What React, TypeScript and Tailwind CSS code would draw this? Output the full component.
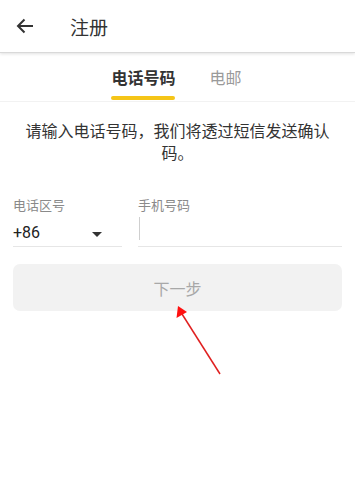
import React from "react";

export default function App() {
  const font = { fontFamily: '"Noto Sans CJK SC", "Noto Sans", Roboto, sans-serif' };
  return (
    <div className="w-[355px] h-[478px] bg-white relative overflow-hidden" style={font}>
      <div className="h-[53px] flex items-center border-b border-[#d9d9d9] shadow-[0_1px_3px_rgba(0,0,0,0.12)]">
        <svg width="18" height="16" viewBox="0 0 18 16" className="ml-[16px]">
          <path d="M17 8H2M8.5 1.5L2 8l6.5 6.5" stroke="#333" strokeWidth="2" fill="none" />
        </svg>
        <span className="ml-[36px] text-[19px] text-[#333] leading-none">注册</span>
      </div>
      <div className="h-[49px] flex justify-center border-b border-[#f2f2f2]">
        <div className="relative flex flex-col items-center ml-[-2px]">
          <span className="mt-[13px] text-[16px] font-bold text-[#333] leading-[22px]">电话号码</span>
          <div className="absolute bottom-[1px] w-[64px] h-[4px] rounded-full bg-[#f5c518]" />
        </div>
        <span className="ml-[34px] mt-[13px] text-[16px] text-[#9a9a9a] leading-[22px]">电邮</span>
      </div>
      <p className="mt-[17px] px-[24px] text-center text-[16px] text-[#333] leading-[22px]">
        请输入电话号码，我们将透过短信发送确认码。
      </p>
      <div className="mt-[33px] mx-[13px] flex gap-[16px]">
        <div className="w-[109px]">
          <div className="text-[13px] text-[#8a8a8a] leading-[18px]">电话区号</div>
          <div className="mt-[5px] h-[28px] flex items-center justify-between border-b border-[#e6e6e6]">
            <span className="text-[16px] text-[#222] leading-none" style={{ fontFamily: 'Roboto, sans-serif' }}>+86</span>
            <svg width="10" height="6" viewBox="0 0 10 6" className="mr-[20px] mt-[4px]">
              <path d="M0 0h10L5 5z" fill="#333" />
            </svg>
          </div>
        </div>
        <div className="flex-1">
          <div className="text-[13px] text-[#8a8a8a] leading-[18px]">手机号码</div>
          <div className="mt-[5px] h-[28px] border-b border-[#e6e6e6] flex items-start">
            <div className="w-[1px] h-[23px] bg-[#cfcfcf] ml-[1px] mt-[-2px]" />
          </div>
        </div>
      </div>
      <div className="mt-[17px] mx-[13px] h-[47px] rounded-[7px] bg-[#f2f2f2] flex items-center justify-center text-[16px] text-[#a8a8a8]">
        下一步
      </div>
      <svg className="absolute left-0 top-0 pointer-events-none" width="355" height="478">
        <line x1="220" y1="374" x2="182" y2="314" stroke="#e02020" strokeWidth="1.5" />
        <polygon points="178,306 176.5,318 187,312" fill="#ff1010" />
      </svg>
    </div>
  );
}
